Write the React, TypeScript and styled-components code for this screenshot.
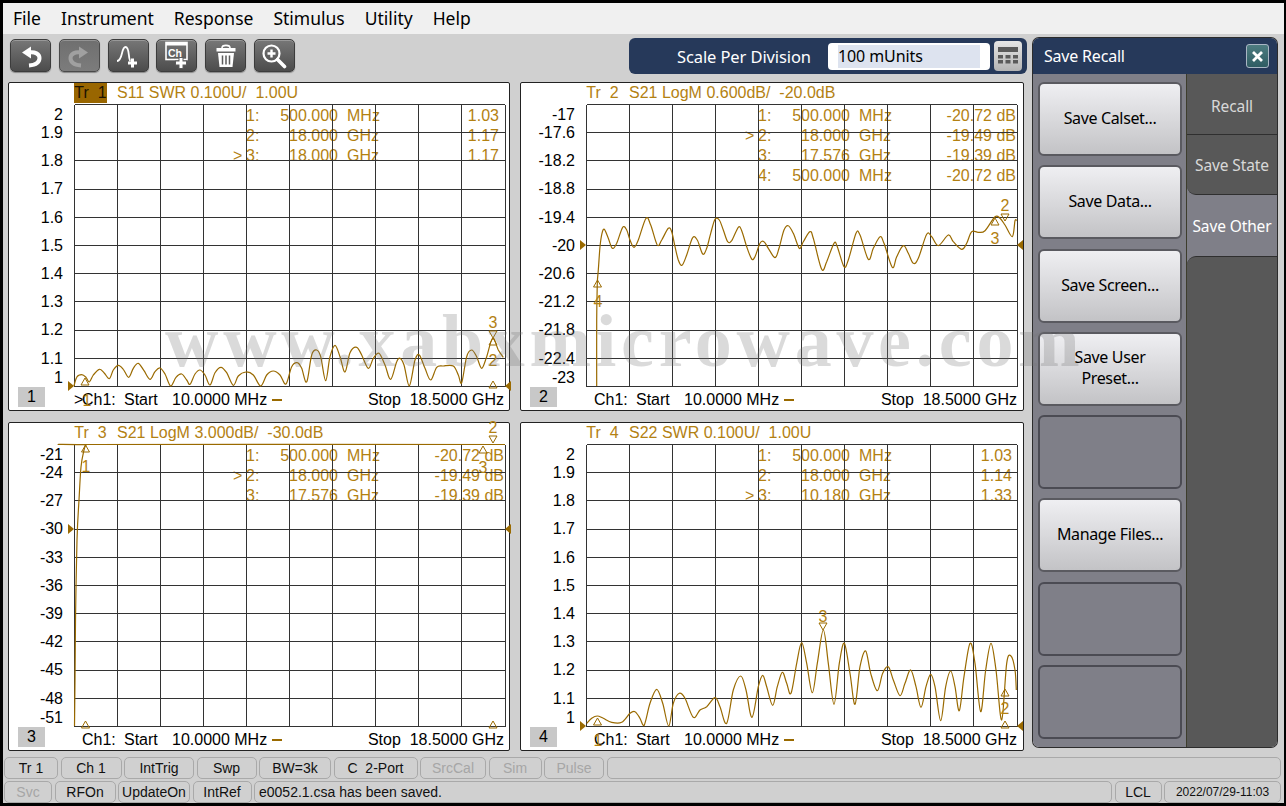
import React from 'react';
import styled, {createGlobalStyle} from 'styled-components';

const GOLD = '#b38112';
const TRACE = '#9a6a00';
const GRID = '#333333';
const UI_FONT = '"Noto Sans", "Open Sans", sans-serif';
const CHART_FONT = '"Liberation Sans", Arial, sans-serif';

const GlobalStyle = createGlobalStyle`
  html, body {
    margin: 0;
    padding: 0;
    background: #000;
  }
`

const Page = styled.div`
  position: relative;
  width: 1286px;
  height: 806px;
  box-sizing: border-box;
  padding: 3px 2px 3px 3px;
  display: flex;
  flex-direction: column;
  background: #000;
  overflow: hidden;
`

const MenuBar = styled.div`
  height: 31px;
  flex: none;
  box-sizing: border-box;
  padding: 0 0 2px 10px;
  display: flex;
  align-items: center;
  gap: 20px;
  background: #f0f0f0;
  font: 17.5px ${UI_FONT};
  color: #000;
`

const Workspace = styled.div`
  flex: 1;
  display: flex;
  flex-direction: column;
  background: #d0d0d0;
`

const Main = styled.div`
  height: 722px;
  flex: none;
  display: flex;
`

const LeftColumn = styled.div`
  width: 1030px;
  flex: none;
  box-sizing: border-box;
  padding-left: 5px;
`

const TopRow = styled.div`
  height: 48px;
  display: flex;
  align-items: flex-start;
  padding: 0 6px 0 2px;
`

const Tools = styled.div`
  display: flex;
  gap: 7.8px;
  margin-top: 5px;
`

const ToolButton = styled.div<{$disabled?: boolean}>`
  width: 41px;
  height: 33px;
  box-sizing: border-box;
  display: flex;
  align-items: center;
  justify-content: center;
  border-radius: 5px;
  border: 1px solid ${p => p.$disabled ? '#4a4a4a' : '#3c3c3c'};
  background: ${p => p.$disabled
    ? 'linear-gradient(#6f6f6f, #7c7c7c)'
    : 'linear-gradient(#777777, #4c4c4c)'};
  box-shadow: inset 0 1px 0 rgba(255, 255, 255, .25), 0 1px 1px rgba(0, 0, 0, .35);
`

const ScaleBar = styled.div`
  margin: 4px 0 0 auto;
  width: 398px;
  height: 36px;
  box-sizing: border-box;
  padding: 0 5px 0 48px;
  display: flex;
  align-items: center;
  border-radius: 6px;
  background: #26395a;
  color: #fff;
  font: 16.5px ${UI_FONT};
  letter-spacing: -.1px;
`

const ScaleLabel = styled.span`
  width: 151px;
  flex: none;
`

const ScaleInput = styled.div`
  width: 162px;
  height: 27px;
  flex: none;
  box-sizing: border-box;
  padding: 2px 10px;
  border-radius: 4px;
  background: #fff;
`

const ScaleValue = styled.div`
  height: 23px;
  line-height: 22px;
  background: #dde3ef;
  color: #000;
  font-size: 16px;
`

const CalcButton = styled.div`
  width: 28px;
  height: 30px;
  margin-left: 4px;
  display: flex;
  align-items: center;
  justify-content: center;
  border-radius: 4px;
  background: linear-gradient(#e6e6e6, #b4b4b4);
`

const PlotGrid = styled.div`
  display: grid;
  grid-template-columns: 502px 504px;
  grid-template-rows: 329px 329px;
  column-gap: 10px;
  row-gap: 11px;
`

const Panel = styled.div`
  box-sizing: border-box;
  display: flex;
  flex-direction: column;
  border: 1px solid #222;
  border-radius: 2px;
  background: #fff;
  font: 16px ${CHART_FONT};
`

const PanelHeader = styled.div`
  height: 21px;
  flex: none;
  display: flex;
  align-items: flex-start;
  padding-left: 65px;
  line-height: 20px;
  color: ${GOLD};
  white-space: pre;
`

const TraceChip = styled.span<{$active?: boolean}>`
  width: 33px;
  height: 20px;
  margin-right: 10px;
  text-align: center;
  background: ${p => p.$active ? '#996600' : 'transparent'};
  color: ${p => p.$active ? '#1c1200' : GOLD};
`

const PanelBody = styled.div`
  height: 283px;
  flex: none;
  display: flex;
`

const Axis = styled.div`
  width: 54px;
  margin-right: 11px;
  flex: none;
  box-sizing: border-box;
  padding-top: 2px;
  display: grid;
  grid-template-rows: 18px repeat(8, 28.2px) 19px 18px;
  color: #000;
  text-align: right;
`

const AxisLabel = styled.span`
  height: 18px;
  line-height: 18px;
`

const Plot = styled.div`
  position: relative;
  width: 432px;
  height: 283px;
  flex: none;
`

const PlotSvg = styled.svg`
  position: relative;
  z-index: 1;
  display: block;
  overflow: visible;
`

const MarkerTable = styled.div<{$right: number}>`
  position: absolute;
  left: 159px;
  right: ${p => p.$right}px;
  top: 2px;
  display: grid;
  grid-template-columns: 13px 21px 71px 9px 34px 1fr;
  grid-auto-rows: 20px;
  line-height: 20px;
  color: ${GOLD};
  white-space: pre;
`

const MarkerFreq = styled.span`
  text-align: right;
`

const MarkerValue = styled.span`
  text-align: right;
`

const PanelFooter = styled.div<{$wide?: boolean}>`
  flex: 1;
  display: flex;
  align-items: flex-start;
  padding-right: ${p => p.$wide ? 6 : 5}px;
  line-height: 26px;
  color: #000;
  white-space: pre;
`

const NumberBox = styled.div`
  width: 27px;
  height: 20px;
  line-height: 20px;
  flex: none;
  margin: 0 29px 0 9px;
  text-align: center;
  background: #c8c8c8;
`

const Caret = styled.span`
  width: 8px;
  flex: none;
`

const FooterCell = styled.span<{$w: number}>`
  width: ${p => p.$w}px;
  flex: none;
`

const SpanDash = styled.span`
  width: 10px;
  height: 2px;
  flex: none;
  margin: 12px 0 0 5px;
  background: ${TRACE};
`

const StopBlock = styled.span`
  margin-left: auto;
`

const SidePanel = styled.div`
  width: 244px;
  height: 709px;
  margin-top: 4px;
  flex: none;
  display: flex;
  flex-direction: column;
  border-radius: 6px;
  overflow: hidden;
  box-shadow: 0 0 0 1px #2c2c2c;
  font-family: ${UI_FONT};
`

const TitleBar = styled.div`
  height: 36px;
  flex: none;
  box-sizing: border-box;
  padding: 0 8px 0 11px;
  display: flex;
  align-items: center;
  justify-content: space-between;
  background: #26395a;
  color: #fff;
  font-size: 16px;
  letter-spacing: -.2px;
`

const CloseButton = styled.div`
  width: 23px;
  height: 24px;
  box-sizing: border-box;
  display: flex;
  align-items: center;
  justify-content: center;
  border: 1px solid #a9b6c4;
  border-radius: 3px;
  background: linear-gradient(#4d7c80, #2f5c63);
`

const SideBody = styled.div`
  flex: 1;
  display: flex;
  min-height: 0;
`

const ButtonColumn = styled.div`
  width: 154px;
  flex: none;
  box-sizing: border-box;
  padding: 8px 4px 0 5px;
  display: flex;
  flex-direction: column;
  gap: 9.3px;
  background: #7f7f88;
  border-right: 1px solid #3d3d2c;
`

const SoftKey = styled.div<{$empty?: boolean}>`
  height: 74px;
  flex: none;
  box-sizing: border-box;
  padding-bottom: 1px;
  display: flex;
  align-items: center;
  justify-content: center;
  text-align: center;
  line-height: 21px;
  font-size: 16px;
  letter-spacing: -.35px;
  color: #000;
  border-radius: 6px;
  border: 2px solid ${p => p.$empty ? '#4b4b53' : '#5a5a60'};
  background: ${p => p.$empty ? '#7f7f88' : 'linear-gradient(#efeff2, #c3c3c6)'};
`

const TabColumn = styled.div`
  flex: 1;
  display: flex;
  flex-direction: column;
  background: #7f7f88;
  font-size: 15.5px;
  letter-spacing: -.12px;
`

const Tab = styled.div<{$h: number; $top?: number; $active?: boolean; $rounded?: boolean}>`
  height: ${p => p.$h}px;
  flex: none;
  box-sizing: border-box;
  padding-top: ${p => p.$top || 0}px;
  display: flex;
  align-items: center;
  justify-content: center;
  color: ${p => p.$active ? '#fff' : '#d8d8d8'};
  background: ${p => p.$active ? '#7f7f88' : '#585858'};
  border-bottom: ${p => p.$active ? '0' : '1px solid #2f2f2f'};
  border-bottom-left-radius: ${p => p.$rounded ? '9px' : '0'};
`

const TabFill = styled.div`
  flex: 1;
  background: #585858;
  border-top: 1px solid #2f2f2f;
  border-top-left-radius: 9px;
`

const StatusArea = styled.div`
  flex: 1;
  box-sizing: border-box;
  padding: 1px 3px 0 1px;
  display: flex;
  flex-direction: column;
  gap: 2px;
`

const StatusRow = styled.div`
  height: 22px;
  flex: none;
  display: flex;
  gap: 2.5px;
`

const StatusCell = styled.div<{$w?: number; $muted?: boolean; $left?: boolean; $small?: boolean}>`
  ${p => p.$w ? `width: ${p.$w}px; flex: none;` : 'flex: 1;'}
  box-sizing: border-box;
  display: flex;
  align-items: center;
  justify-content: ${p => p.$left ? 'flex-start' : 'center'};
  padding-left: ${p => p.$left ? '4px' : '0'};
  border: 1px solid #a9a9a9;
  border-radius: 5px;
  font: ${p => p.$small ? '12px' : '14px'} ${CHART_FONT};
  color: ${p => p.$muted ? '#a6a6a6' : '#111'};
  white-space: pre;
`

const Watermark = styled.div`
  position: absolute;
  left: 165px;
  top: 299px;
  z-index: 5;
  pointer-events: none;
  font: bold 74px "Liberation Serif", serif;
  letter-spacing: 4.7px;
  color: rgba(120, 120, 120, .27);
  white-space: nowrap;
`

type Pt = [number, number]
type Marker = {n?: string; x: number; y: number; down?: boolean; lx?: number; ly?: number}
type MarkerRow = {active?: boolean; id: string; freq: string; unit: string; value: string}

// trace points were read off 3x crops, so they carry the crop origin
const fromCrop = (pts: number[], ox: number, oy: number): Pt[] => {
  const out: Pt[] = []
  for (let i = 0; i < pts.length; i += 2) out.push([ox + pts[i] / 3, oy + pts[i + 1] / 3])
  return out
}

const smoothPath = (pts: Pt[], px: number, py: number) => {
  const p = pts.map(([x, y]) => [x - px, y - py])
  let d = `M${p[0][0].toFixed(1)} ${p[0][1].toFixed(1)}`
  for (let i = 0; i < p.length - 1; i++) {
    const a = p[Math.max(i - 1, 0)], b = p[i], c = p[i + 1], e = p[Math.min(i + 2, p.length - 1)]
    const c1x = b[0] + (c[0] - a[0]) / 6, c1y = Math.min(b[1] + (c[1] - a[1]) / 6, 282)
    const c2x = c[0] - (e[0] - b[0]) / 6, c2y = Math.min(c[1] - (e[1] - b[1]) / 6, 282)
    d += `C${c1x.toFixed(1)} ${c1y.toFixed(1)} ${c2x.toFixed(1)} ${c2y.toFixed(1)} ${c[0].toFixed(1)} ${c[1].toFixed(1)}`
  }
  return d
}

const trace1 = fromCrop([222,258,230,232,245,224,258,232,268,246,280,225,298,208,312,218,328,236,340,210,355,196,370,208,386,232,400,205,415,190,432,212,450,238,465,215,480,204,495,222,512,258,528,232,545,222,560,240,570,253,585,222,600,210,615,225,630,255,645,218,663,202,680,218,700,256,715,228,738,216,760,225,782,258,800,225,820,213,840,225,858,252,875,200,892,188,905,205,920,246,935,165,950,150,962,170,977,242,990,170,1005,136,1020,170,1035,216,1050,158,1070,142,1085,165,1105,205,1120,175,1137,160,1155,195,1172,238,1190,185,1200,175,1212,195,1228,258,1245,180,1258,165,1275,205,1292,240,1310,202,1330,198,1360,198,1375,225,1385,248,1400,170,1415,150,1430,170,1445,205,1460,170,1478,115,1495,150,1510,172], 0, 300)

const trace2 = fromCrop([50,588,50,390,52,280,55,240,60,170,66,130,73,118,85,145,97,175,110,160,128,112,140,120,150,150,162,172,175,150,198,85,212,105,232,165,245,150,265,115,275,125,285,170,295,210,306,226,320,195,338,143,352,150,368,192,380,175,392,130,405,88,418,90,430,120,443,155,455,152,475,112,485,122,500,170,515,207,525,200,540,160,552,155,565,175,585,203,597,175,612,120,625,107,640,130,658,175,670,155,690,125,700,145,725,238,740,215,762,160,772,170,792,230,805,210,828,130,840,135,865,208,880,175,900,140,912,160,937,232,950,200,970,167,985,190,1000,220,1015,205,1040,133,1055,140,1075,167,1105,135,1120,155,1145,178,1160,160,1175,125,1195,127,1215,122,1245,80,1260,85,1275,105,1297,140,1305,92,1310,92], 580, 190)

const trace3: Pt[] = [[74.5,726],[75,680],[75.5,620],[77,540],[79,500],[81,467],[84,450],[86,445],[90,444.5],[505,444.5]]

const trace4 = fromCrop([20,400,35,385,52,378,70,385,95,397,125,397,150,370,165,365,180,385,192,407,210,340,230,298,248,340,266,408,280,340,298,310,315,325,340,382,360,360,380,350,405,323,420,350,440,400,460,300,482,258,498,300,516,382,535,290,548,256,560,290,578,346,592,290,607,247,620,280,633,310,650,220,665,158,680,220,697,308,712,220,730,120,745,220,762,343,778,220,793,160,810,250,825,343,840,230,857,183,872,250,892,302,908,250,925,230,940,270,960,317,975,280,992,240,1008,290,1023,352,1038,290,1052,253,1065,290,1082,392,1097,290,1112,243,1125,290,1138,362,1152,260,1170,160,1185,220,1202,365,1217,240,1233,160,1248,240,1265,390,1280,220,1293,198,1305,240,1309,300], 580, 590)

type PlotInfo = {
  no: number
  px: number
  py: number
  active?: boolean
  caret?: boolean
  trace: string
  title: string
  axis: string[]
  path: string
  refY: number
  right: number
  rows: MarkerRow[]
  markers: Marker[]
}

const plots: PlotInfo[] = [
  {
    no: 1, px: 74, py: 104, active: true, caret: true, trace: 'Tr  1',
    title: 'S11 SWR 0.100U/  1.00U',
    axis: ['2', '1.9', '1.8', '1.7', '1.6', '1.5', '1.4', '1.3', '1.2', '1.1', '1'],
    path: smoothPath(trace1, 74, 104), refY: 386, right: 7,
    rows: [
      {id: '1:', freq: '500.000', unit: 'MHz', value: '1.03'},
      {id: '2:', freq: '18.000', unit: 'GHz', value: '1.17'},
      {active: true, id: '3:', freq: '18.000', unit: 'GHz', value: '1.17'},
    ],
    markers: [
      {n: '1', x: 85, y: 378, lx: 87, ly: 400},
      {n: '3', x: 493, y: 331, down: true, lx: 493, ly: 322},
      {n: '2', x: 493, y: 338, lx: 493, ly: 360},
      {x: 493, y: 381},
    ],
  },
  {
    no: 2, px: 586, py: 104, trace: 'Tr  2',
    title: 'S21 LogM 0.600dB/  -20.0dB',
    axis: ['-17', '-17.6', '-18.2', '-18.8', '-19.4', '-20', '-20.6', '-21.2', '-21.8', '-22.4', '-23'],
    path: smoothPath(trace2, 586, 104), refY: 245, right: 2,
    rows: [
      {id: '1:', freq: '500.000', unit: 'MHz', value: '-20.72 dB'},
      {active: true, id: '2:', freq: '18.000', unit: 'GHz', value: '-19.49 dB'},
      {id: '3:', freq: '17.576', unit: 'GHz', value: '-19.39 dB'},
      {id: '4:', freq: '500.000', unit: 'MHz', value: '-20.72 dB'},
    ],
    markers: [
      {n: '2', x: 1005, y: 214, down: true, lx: 1005, ly: 205},
      {n: '3', x: 995, y: 218, lx: 995, ly: 238},
      {n: '4', x: 597.5, y: 280, lx: 598, ly: 301},
    ],
  },
  {
    no: 3, px: 74, py: 444, trace: 'Tr  3',
    title: 'S21 LogM 3.000dB/  -30.0dB',
    axis: ['-21', '-24', '-27', '-30', '-33', '-36', '-39', '-42', '-45', '-48', '-51'],
    path: smoothPath(trace3, 74, 444), refY: 529, right: 2,
    rows: [
      {id: '1:', freq: '500.000', unit: 'MHz', value: '-20.72 dB'},
      {active: true, id: '2:', freq: '18.000', unit: 'GHz', value: '-19.49 dB'},
      {id: '3:', freq: '17.576', unit: 'GHz', value: '-19.39 dB'},
    ],
    markers: [
      {n: '1', x: 85.5, y: 445, lx: 86, ly: 466},
      {n: '2', x: 493, y: 436, down: true, lx: 493, ly: 427},
      {n: '3', x: 483, y: 446, lx: 483, ly: 467},
      {x: 85.5, y: 721},
      {x: 493, y: 721},
    ],
  },
  {
    no: 4, px: 586, py: 444, trace: 'Tr  4',
    title: 'S22 SWR 0.100U/  1.00U',
    axis: ['2', '1.9', '1.8', '1.7', '1.6', '1.5', '1.4', '1.3', '1.2', '1.1', '1'],
    path: smoothPath(trace4, 586, 444), refY: 726, right: 6,
    rows: [
      {id: '1:', freq: '500.000', unit: 'MHz', value: '1.03'},
      {id: '2:', freq: '18.000', unit: 'GHz', value: '1.14'},
      {active: true, id: '3:', freq: '10.180', unit: 'GHz', value: '1.33'},
    ],
    markers: [
      {n: '3', x: 823, y: 623, down: true, lx: 823, ly: 616},
      {n: '1', x: 597.5, y: 718, lx: 598, ly: 740},
      {n: '2', x: 1005, y: 689, lx: 1005, ly: 708},
      {x: 1005, y: 721},
    ],
  },
]

const softKeys: {label?: string[]}[] = [
  {label: ['Save Calset...']},
  {label: ['Save Data...']},
  {label: ['Save Screen...']},
  {label: ['Save User', 'Preset...']},
  {},
  {label: ['Manage Files...']},
  {},
  {},
]

const statusTop: {t: string; w?: number; muted?: boolean}[] = [
  {t: 'Tr 1', w: 54},
  {t: 'Ch 1', w: 61},
  {t: 'IntTrig', w: 70},
  {t: 'Swp', w: 60},
  {t: 'BW=3k', w: 72},
  {t: 'C  2-Port', w: 84},
  {t: 'SrcCal', w: 66, muted: true},
  {t: 'Sim', w: 53, muted: true},
  {t: 'Pulse', w: 60, muted: true},
  {t: ''},
]

const statusBottom: {t: string; w?: number; muted?: boolean}[] = [
  {t: 'Svc', w: 48, muted: true},
  {t: 'RFOn', w: 61},
  {t: 'UpdateOn', w: 72},
  {t: 'IntRef', w: 59},
]

const UndoIcon = ({color, flip}: {color: string; flip?: boolean}) => (
  <svg width="24" height="24" viewBox="0 0 24 24" style={flip ? {transform: 'scaleX(-1)'} : undefined}>
    <path d="M3 8.5 L12 2.5 V14.5 Z" fill={color}/>
    <path d="M10 8.5 C16 7.5 20.5 10 20.5 14 C20.5 18.5 16 21 10 21.5" fill="none" stroke={color} strokeWidth="4"/>
  </svg>
)

const TraceAddIcon = () => (
  <svg width="28" height="26" viewBox="0 0 28 26">
    <path d="M3 18 C9 18 7 4 11.5 4 C16 4 14 17 16.5 18" fill="none" stroke="#fff" strokeWidth="1.8"/>
    <path d="M18.5 15.5 V24.5 M14 20 H23" stroke="#fff" strokeWidth="3"/>
  </svg>
)

const ChannelAddIcon = () => (
  <svg width="28" height="30" viewBox="0 0 28 30">
    <rect x="3" y="1.5" width="21" height="17" fill="none" stroke="#fff" strokeWidth="1.6"/>
    <rect x="3" y="1.5" width="21" height="3" fill="#fff"/>
    <text x="5" y="15.5" fontFamily={CHART_FONT} fontSize="10.5" fontWeight="bold" fill="#fff">Ch</text>
    <path d="M18 16 V28 M12 22 H24" stroke="#5c5c5c" strokeWidth="5"/>
    <path d="M18 17 V27 M13 22 H23" stroke="#fff" strokeWidth="3"/>
  </svg>
)

const TrashIcon = () => (
  <svg width="24" height="26" viewBox="0 0 24 26">
    <path d="M8 5 C8 1.5 16 1.5 16 5" fill="none" stroke="#fff" strokeWidth="1.6"/>
    <path d="M2.5 5 H21.5 V8.5 H2.5 Z" fill="#fff"/>
    <path d="M4 10 H20 L18.5 24 H5.5 Z" fill="#fff"/>
    <path d="M8.5 12.5 V21.5 M12 12.5 V21.5 M15.5 12.5 V21.5" stroke="#5c5c5c" strokeWidth="1.5"/>
  </svg>
)

const ZoomIcon = () => (
  <svg width="26" height="26" viewBox="0 0 26 26">
    <circle cx="10.5" cy="10.5" r="8" fill="none" stroke="#fff" strokeWidth="2.2"/>
    <path d="M10.5 6.5 V14.5 M6.5 10.5 H14.5" stroke="#fff" strokeWidth="2.4"/>
    <path d="M16.5 16.5 L23.5 23.5" stroke="#fff" strokeWidth="3.6" strokeLinecap="round"/>
  </svg>
)

const CalcIcon = () => (
  <svg width="22" height="22" viewBox="0 0 22 22">
    <rect x="1" y="2" width="20" height="5" fill="#5a5a5a"/>
    {[10, 15].map(y => [1, 8.5, 16].map(x => (
      <rect key={`${x}-${y}`} x={x} y={y} width="5" height="3.5" fill="#5a5a5a"/>
    )))}
  </svg>
)

const CloseIcon = () => (
  <svg width="13" height="13" viewBox="0 0 13 13">
    <path d="M2 2 L11 11 M11 2 L2 11" stroke="#fff" strokeWidth="2.8"/>
  </svg>
)

const Grid = ({refY}: {refY: number}) => {
  const xs = Array.from({length: 11}, (_, i) => Math.round(i * 43.05) + 0.5)
  const ys = Array.from({length: 11}, (_, i) => Math.round(i * 28.2) + 0.5)
  return (
    <g>
      {xs.map(x => <line key={x} x1={x} x2={x} y1={0.5} y2={282.5} stroke={GRID} shapeRendering="crispEdges"/>)}
      {ys.map(y => <line key={y} x1={0.5} x2={430.5} y1={y} y2={y} stroke={GRID} shapeRendering="crispEdges"/>)}
      <path d={`M-6 ${refY - 5} L0 ${refY} L-6 ${refY + 5} Z`} fill={TRACE}/>
      <path d={`M437 ${refY - 5} L431 ${refY} L437 ${refY + 5} Z`} fill={TRACE}/>
    </g>
  )
}

const MarkerGlyph = ({m, px, py}: {m: Marker; px: number; py: number}) => {
  const x = m.x - px
  const y = m.y - py
  const d = m.down
    ? `M${x - 4} ${y} H${x + 4} L${x} ${y + 7} Z`
    : `M${x} ${y} L${x + 4} ${y + 7} H${x - 4} Z`
  return (
    <g>
      <path d={d} fill="none" stroke={TRACE} strokeWidth="1"/>
      {m.n && (
        <text
          x={(m.lx as number) - px}
          y={(m.ly as number) - py + 6}
          textAnchor="middle"
          fontFamily={CHART_FONT}
          fontSize="16"
          fill={GOLD}
        >{m.n}</text>
      )}
    </g>
  )
}

const PlotPanel = ({plot}: {plot: PlotInfo}) => (
  <Panel>
    <PanelHeader>
      <TraceChip $active={plot.active}>{plot.trace}</TraceChip>
      {plot.title}
    </PanelHeader>
    <PanelBody>
      <Axis>
        {plot.axis.map(a => <AxisLabel key={a}>{a}</AxisLabel>)}
      </Axis>
      <Plot>
        <MarkerTable $right={plot.right}>
          {plot.rows.map(r => (
            <React.Fragment key={r.id}>
              <span>{r.active ? '>' : ''}</span>
              <span>{r.id}</span>
              <MarkerFreq>{r.freq}</MarkerFreq>
              <span/>
              <span>{r.unit}</span>
              <MarkerValue>{r.value}</MarkerValue>
            </React.Fragment>
          ))}
        </MarkerTable>
        <PlotSvg width="432" height="283" viewBox="0 0 432 283">
          <Grid refY={plot.refY - plot.py}/>
          <path d={plot.path} fill="none" stroke={TRACE} strokeWidth="1.2"/>
          {plot.markers.map((m, i) => <MarkerGlyph key={i} m={m} px={plot.px} py={plot.py}/>)}
        </PlotSvg>
      </Plot>
    </PanelBody>
    <PanelFooter $wide={plot.no % 2 === 0}>
      <NumberBox>{plot.no}</NumberBox>
      <Caret>{plot.caret ? '>' : ''}</Caret>
      <FooterCell $w={42}>Ch1:</FooterCell>
      <FooterCell $w={48}>Start</FooterCell>
      <span>10.0000 MHz</span>
      <SpanDash/>
      <StopBlock>Stop  18.5000 GHz</StopBlock>
    </PanelFooter>
  </Panel>
)

const App = () => {
  return (
    <Page>
      <GlobalStyle/>
      <MenuBar>
        {['File', 'Instrument', 'Response', 'Stimulus', 'Utility', 'Help'].map(m => <span key={m}>{m}</span>)}
      </MenuBar>
      <Workspace>
        <Main>
          <LeftColumn>
            <TopRow>
              <Tools>
                <ToolButton><UndoIcon color="#fff"/></ToolButton>
                <ToolButton $disabled><UndoIcon color="#a0a0a0" flip/></ToolButton>
                <ToolButton><TraceAddIcon/></ToolButton>
                <ToolButton><ChannelAddIcon/></ToolButton>
                <ToolButton><TrashIcon/></ToolButton>
                <ToolButton><ZoomIcon/></ToolButton>
              </Tools>
              <ScaleBar>
                <ScaleLabel>Scale Per Division</ScaleLabel>
                <ScaleInput>
                  <ScaleValue>100 mUnits</ScaleValue>
                </ScaleInput>
                <CalcButton><CalcIcon/></CalcButton>
              </ScaleBar>
            </TopRow>
            <PlotGrid>
              {plots.map(p => <PlotPanel key={p.no} plot={p}/>)}
            </PlotGrid>
          </LeftColumn>
          <SidePanel>
            <TitleBar>
              <span>Save Recall</span>
              <CloseButton><CloseIcon/></CloseButton>
            </TitleBar>
            <SideBody>
              <ButtonColumn>
                {softKeys.map((k, i) => (
                  <SoftKey key={i} $empty={!k.label}>
                    {k.label && <span>{k.label.map(l => <div key={l}>{l}</div>)}</span>}
                  </SoftKey>
                ))}
              </ButtonColumn>
              <TabColumn>
                <Tab $h={61} $top={3}>Recall</Tab>
                <Tab $h={60} $rounded>Save State</Tab>
                <Tab $h={61} $active>Save Other</Tab>
                <TabFill/>
              </TabColumn>
            </SideBody>
          </SidePanel>
        </Main>
        <StatusArea>
          <StatusRow>
            {statusTop.map((s, i) => <StatusCell key={i} $w={s.w} $muted={s.muted}>{s.t}</StatusCell>)}
          </StatusRow>
          <StatusRow>
            {statusBottom.map(s => <StatusCell key={s.t} $w={s.w} $muted={s.muted}>{s.t}</StatusCell>)}
            <StatusCell $left>e0052.1.csa has been saved.</StatusCell>
            <StatusCell $w={47}>LCL</StatusCell>
            <StatusCell $w={117} $small>2022/07/29-11:03</StatusCell>
          </StatusRow>
        </StatusArea>
      </Workspace>
      <Watermark>www.xabxmicrowave.com</Watermark>
    </Page>
  );
};

export default App;
